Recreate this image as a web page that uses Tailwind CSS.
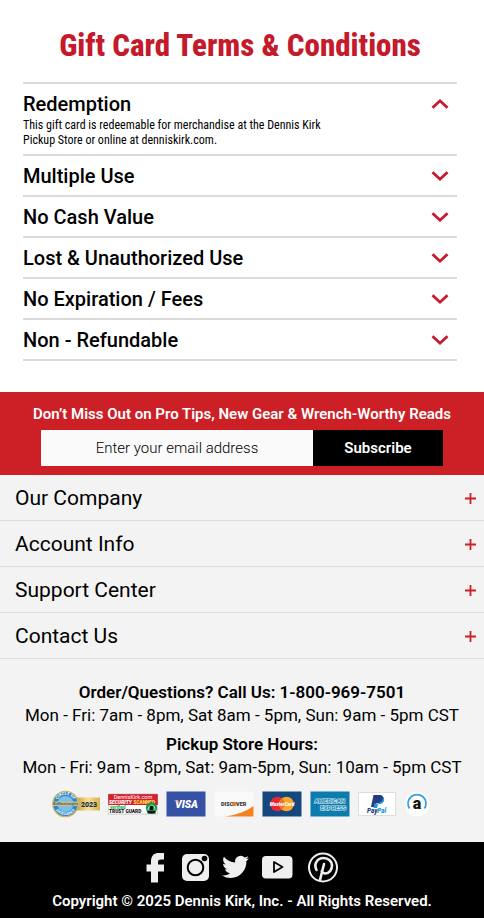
<!DOCTYPE html>
<html lang="en">
<head>
  <meta charset="UTF-8" />
  <meta name="viewport" content="width=device-width, initial-scale=1.0"/>
  <title>Gift Card Terms | Dennis Kirk</title>
  <script src="https://cdn.jsdelivr.net/npm/@tailwindcss/browser@4"></script>
</head>
<body class="bg-white text-black font-['Roboto',sans-serif]">

  <!-- Terms -->
  <main class="pl-[23px] pr-[27px] pt-6 pb-[31px]">
    <h1 class="text-center text-[31px] leading-[44px] mb-[14px] font-extrabold text-[#c41a2b] whitespace-nowrap font-['Roboto_Condensed','Roboto',sans-serif]">Gift Card Terms &amp; Conditions</h1>
    <div class="border-t-2 border-[#dadada]">
      <section class="border-b-2 border-[#dadada]">
        <button type="button" aria-expanded="true" aria-controls="redemption" class="flex w-full items-center justify-between pt-2 pb-0.5 pr-2 text-left text-xl leading-6 font-medium">
          Redemption
          <svg class="w-[18px] h-3" viewBox="0 0 18 12" fill="none" stroke="#c41a2b" stroke-width="2.8"><path d="M1.500 9.800 9 2.800l7.500 7"/></svg>
        </button>
        <p id="redemption" class="pb-1.5 text-xs leading-[15px] font-['Roboto_Condensed','Roboto',sans-serif]">This gift card is redeemable for merchandise at the Dennis Kirk<br>Pickup Store or online at denniskirk.com.</p>
      </section>
      <section class="border-b-2 border-[#dadada]">
        <button type="button" aria-expanded="false" class="flex w-full items-center justify-between pt-2 pb-[7px] pr-2 text-left text-xl leading-6 font-medium">
          Multiple Use
          <svg class="w-[18px] h-3" viewBox="0 0 18 12" fill="none" stroke="#c41a2b" stroke-width="2.8"><path d="m1.500 2.200 7.500 7 7.500-7"/></svg>
        </button>
      </section>
      <section class="border-b-2 border-[#dadada]">
        <button type="button" aria-expanded="false" class="flex w-full items-center justify-between pt-2 pb-[7px] pr-2 text-left text-xl leading-6 font-medium">
          No Cash Value
          <svg class="w-[18px] h-3" viewBox="0 0 18 12" fill="none" stroke="#c41a2b" stroke-width="2.8"><path d="m1.500 2.200 7.500 7 7.500-7"/></svg>
        </button>
      </section>
      <section class="border-b-2 border-[#dadada]">
        <button type="button" aria-expanded="false" class="flex w-full items-center justify-between pt-2 pb-[7px] pr-2 text-left text-xl leading-6 font-medium">
          Lost &amp; Unauthorized Use
          <svg class="w-[18px] h-3" viewBox="0 0 18 12" fill="none" stroke="#c41a2b" stroke-width="2.8"><path d="m1.500 2.200 7.500 7 7.500-7"/></svg>
        </button>
      </section>
      <section class="border-b-2 border-[#dadada]">
        <button type="button" aria-expanded="false" class="flex w-full items-center justify-between pt-2 pb-[7px] pr-2 text-left text-xl leading-6 font-medium">
          No Expiration / Fees
          <svg class="w-[18px] h-3" viewBox="0 0 18 12" fill="none" stroke="#c41a2b" stroke-width="2.8"><path d="m1.500 2.200 7.500 7 7.500-7"/></svg>
        </button>
      </section>
      <section class="border-b-2 border-[#dadada]">
        <button type="button" aria-expanded="false" class="flex w-full items-center justify-between pt-2 pb-[7px] pr-2 text-left text-xl leading-6 font-medium">
          Non - Refundable
          <svg class="w-[18px] h-3" viewBox="0 0 18 12" fill="none" stroke="#c41a2b" stroke-width="2.8"><path d="m1.500 2.200 7.500 7 7.500-7"/></svg>
        </button>
      </section>
    </div>
  </main>

  <footer class="bg-[#f3f3f3]">
    <!-- Newsletter -->
    <form class="bg-[#cc1f26] pt-3 pb-[9px] px-[41px]">
      <label for="email" class="flex justify-center whitespace-nowrap text-[15px] leading-5 font-semibold text-white">Don’t Miss Out on Pro Tips, New Gear &amp; Wrench-Worthy Reads</label>
      <div class="mt-1.5 flex h-9">
        <input id="email" type="email" placeholder="Enter your email address" class="min-w-0 flex-1 bg-[#fafafa] text-center text-[15px] font-light placeholder:text-black">
        <button type="button" class="w-[130px] bg-black text-[15px] font-semibold text-white">Subscribe</button>
      </div>
    </form>

    <!-- Link groups -->
    <nav>
      <button type="button" class="flex h-[46px] w-full items-center justify-between border-b border-[#dcdcdc] pt-0.5 pl-[15px] pr-2 text-left text-[21px]">
        Our Company
        <svg class="size-[11px]" viewBox="0 0 11 11" stroke="#cc1f26" stroke-width="1.8"><path d="M5.500 0v11M0 5.500h11"/></svg>
      </button>
      <button type="button" class="flex h-[46px] w-full items-center justify-between border-b border-[#dcdcdc] pt-0.5 pl-[15px] pr-2 text-left text-[21px]">
        Account Info
        <svg class="size-[11px]" viewBox="0 0 11 11" stroke="#cc1f26" stroke-width="1.8"><path d="M5.500 0v11M0 5.500h11"/></svg>
      </button>
      <button type="button" class="flex h-[46px] w-full items-center justify-between border-b border-[#dcdcdc] pt-0.5 pl-[15px] pr-2 text-left text-[21px]">
        Support Center
        <svg class="size-[11px]" viewBox="0 0 11 11" stroke="#cc1f26" stroke-width="1.8"><path d="M5.500 0v11M0 5.500h11"/></svg>
      </button>
      <button type="button" class="flex h-[46px] w-full items-center justify-between border-b border-[#dcdcdc] pt-0.5 pl-[15px] pr-2 text-left text-[21px]">
        Contact Us
        <svg class="size-[11px]" viewBox="0 0 11 11" stroke="#cc1f26" stroke-width="1.8"><path d="M5.500 0v11M0 5.500h11"/></svg>
      </button>
    </nav>

    <!-- Hours -->
    <div class="flex flex-col items-center pt-[22px] text-[17px] leading-[23px] whitespace-nowrap">
      <a href="tel:18009697501" class="font-semibold">Order/Questions? Call Us: 1-800-969-7501</a>
      <p>Mon - Fri: 7am - 8pm, Sat 8am - 5pm, Sun: 9am - 5pm CST</p>
      <p class="mt-1.5 font-semibold">Pickup Store Hours:</p>
      <p>Mon - Fri: 9am - 8pm, Sat: 9am-5pm, Sun: 10am - 5pm CST</p>
    </div>

    <!-- Badges -->
    <div class="flex items-center justify-center gap-2 pt-[11px] pb-6">
      <svg class="h-7 w-12" viewBox="0 0 48 28" role="img" aria-label="Circle of Excellence 2023">
        <defs>
          <linearGradient id="gold"><stop stop-color="#c99d35"/><stop offset=".5" stop-color="#f6e09a"/><stop offset="1" stop-color="#d9b34e"/></linearGradient>
          <path id="arcTop" d="M4.300 14a9.200 9.200 0 0 1 18.400 0"/>
          <path id="arcBottom" d="M1.500 13a12 12 0 0 0 24 0"/>
        </defs>
        <path fill="url(#gold)" d="M24 7.500h24v13H24z"/>
        <circle cx="13.500" cy="14" r="12.700" fill="#2f88c6" stroke="#d2b565" stroke-width="1.200"/>
        <circle cx="13.500" cy="14" r="8" fill="#7cc0e8"/>
        <path fill="#cbbf94" d="M.5 11.500h26.500v4.500H.5z"/>
        <text font-size="4" font-weight="700" fill="#fff"><textPath href="#arcTop" startOffset="50%" text-anchor="middle">CIRCLE OF</textPath></text>
        <text font-size="3.700" font-weight="700" fill="#fff"><textPath href="#arcBottom" startOffset="50%" text-anchor="middle">EXCELLENCE</textPath></text>
        <text x="13.700" y="15" font-size="3.600" font-weight="700" fill="#4c6068" text-anchor="middle">BizRateInsights</text>
        <text x="37" y="16.500" font-size="7" font-weight="900" fill="#14334f" text-anchor="middle">2023</text>
      </svg>
      <svg class="h-[22px] w-[50px]" viewBox="0 0 50 22" role="img" aria-label="Denniskirk.com Security Scanned Trust Guard">
        <path fill="#fff" d="M0 1h50v20H0z"/>
        <path fill="#d91f2b" d="M0 1h50v11H0z"/>
        <path fill="none" stroke="#999" stroke-width=".5" d="M.2 1h49.600v20H.2z"/>
        <text x="25" y="5.700" font-size="5.500" fill="#fff" text-anchor="middle">DennisKirk.com</text>
        <text x="1" y="11" font-size="5" font-weight="900" font-style="italic" fill="#fff">SECURITY</text>
        <text x="25.500" y="11" font-size="4.700" font-weight="900" fill="#ffe24a">SCANNED</text>
        <text x="2" y="16" font-size="4.500" font-weight="900" fill="#27b35d">verified</text>
        <text x="1" y="20" font-size="4.800" font-weight="900" fill="#111">TRUST GUARD</text>
        <circle cx="43.500" cy="15" r="5.700" fill="#15934d"/>
        <path fill="#111" d="M39.500 18h8v2.500h-8zM42 12h3v5h-3z"/>
        <path fill="none" stroke="#b8f0c9" d="M40 17c0-3 2-5 4-5s3 3 3 5"/>
      </svg>
      <svg class="h-[26px] w-10" viewBox="0 0 40 26" role="img" aria-label="Visa">
        <path fill="#3552a5" d="M.5.500H39.500v25H.5z"/>
        <text x="20.500" y="16.800" font-size="10.500" font-weight="900" font-style="italic" fill="#fff" text-anchor="middle">VISA</text>
        <path fill="#f7a33b" d="M8.500 9.200H12l1.500 3.500C12.500 11.200 10.500 10 8.500 9.700z"/>
      </svg>
      <svg class="h-[26px] w-10" viewBox="0 0 40 26" role="img" aria-label="Discover">
        <path fill="#f9f9f9" d="M.5.500H39.500v25H.5z"/>
        <path fill="#f58220" d="M39.500 15v10.500H11C23 24 33 20 39.500 15z"/>
        <circle cx="20.500" cy="13" r="2.200" fill="#f58220"/>
        <text x="7" y="15" font-size="5.500" font-weight="900" fill="#30343b">DISC</text>
        <text x="22" y="15" font-size="5.500" font-weight="900" fill="#30343b">VER</text>
      </svg>
      <svg class="h-[26px] w-10" viewBox="0 0 40 26" role="img" aria-label="MasterCard">
        <path fill="#15477f" d="M.5.500H39.500v25H.5z"/>
        <circle cx="15.500" cy="13" r="7.300" fill="#e82735"/>
        <circle cx="24.500" cy="13" r="7.300" fill="#f9a72b"/>
        <path fill="#ef7230" d="M20 7.300a7.300 7.300 0 0 1 0 11.400 7.300 7.300 0 0 1 0-11.400z"/>
        <text x="20" y="14.800" font-size="4.800" font-weight="900" font-style="italic" fill="#fff" text-anchor="middle">MasterCard</text>
      </svg>
      <svg class="h-[26px] w-10" viewBox="0 0 40 26" role="img" aria-label="American Express">
        <path fill="#0d7cad" d="M.5.500H39.500v25H.5z"/>
        <g font-size="6" font-weight="700" fill="#1b83b2" stroke="#d8edf6" stroke-width="1.200" paint-order="stroke">
          <text x="4.500" y="12">AMERICAN</text>
          <text x="36" y="18.500" text-anchor="end">EXPRESS</text>
        </g>
      </svg>
      <svg class="h-[26px] w-10" viewBox="0 0 40 26" role="img" aria-label="PayPal">
        <path fill="#fff" stroke="#ddd" d="M.5 1.500H37.500v23H.5z"/>
        <path fill="#263b80" d="M15.500 4h6c3.500 0 4.500 2.500 3.500 5-1 2.500-3 3-6 3h-1l-1 4h-4z"/>
        <path fill="#159bd7" d="M25 6c1.500 1 1.500 3 .5 5-1 1.800-3 2.200-5.500 2.200L19 17h-3.500l1-4.500h2.200C22 12.500 24.500 11 25 6z"/>
        <text x="9" y="21.800" font-size="6.300" font-weight="900" font-style="italic" fill="#263b80">Pay<tspan fill="#159bd7">Pal</tspan></text>
      </svg>
      <svg class="size-[26px]" viewBox="0 0 26 26" role="img" aria-label="Affirm">
        <circle cx="11" cy="13" r="12.500" fill="#fff"/>
        <path fill="none" stroke="#35a0e2" stroke-width="1.700" d="M3.500 17.500A9 9 0 1 1 18.500 17.500"/>
        <text x="11" y="18" font-size="16" font-weight="900" fill="#111" text-anchor="middle">a</text>
      </svg>
    </div>

    <!-- Social -->
    <div class="bg-black pt-[9px] pb-1.5 text-white">
      <div class="flex items-center justify-center gap-3">
        <a href="#" aria-label="Facebook"><svg class="h-8 w-6" viewBox="8 0 24 32" fill="#efefef"><path d="M13 31.500V20.500H8.500v-7H13V10.500C13 4.500 16 2 21 2h5v6.500h-3c-2 0-3 .7-3 2.500v2.500h6v7h-6v11z"/></svg></a>
        <a href="#" aria-label="Instagram"><svg class="h-8 w-7" viewBox="0 0 28 32"><rect x="0" y="3" width="27" height="27" rx="5" fill="#efefef"/><circle cx="13.500" cy="16.500" r="7.800" fill="none" stroke="#000" stroke-width="2"/><circle cx="22.500" cy="7.500" r="2.800"/></svg></a>
        <a href="#" aria-label="Twitter"><svg class="h-8 w-7" viewBox="2 0 21 24" fill="#efefef"><path d="M22.200 5.500c-.7.300-1.500.6-2.400.7.900-.5 1.500-1.300 1.800-2.300-.8.500-1.700.8-2.600 1a4.200 4.200 0 0 0-7.100 3.800c-3.400-.2-6.500-1.800-8.500-4.300-1.100 1.900-.6 4.300 1.300 5.600-.7 0-1.300-.2-1.900-.5 0 2 1.400 3.700 3.300 4.100-.6.200-1.200.2-1.900.1.600 1.700 2.100 2.900 3.900 2.900A8.500 8.500 0 0 1 2 18.300a12 12 0 0 0 6.400 1.900c7.700 0 12.200-6.600 11.900-12.500.8-.6 1.400-1.300 1.900-2.200z"/></svg></a>
        <a href="#" aria-label="YouTube"><svg class="size-8" viewBox="0 0 32 32"><rect x="0" y="5" width="30.500" height="22.500" rx="4" fill="#efefef"/><path fill="none" stroke="#000" stroke-width="1.800" stroke-linejoin="round" d="M12 11v10l8.500-5z"/></svg></a>
        <a href="#" aria-label="Pinterest"><svg class="size-8" viewBox="0 0 32 32" fill="none" stroke="#efefef"><circle cx="17" cy="16.500" r="14" stroke-width="2"/><path stroke-width="2.600" stroke-linecap="round" d="M10.500 19c-3-5.500.5-12 7-12 5 0 8.500 3.500 8.500 7.500 0 4.500-3 8-6.500 8-2 0-3.300-.9-3.800-2.200M18 13l-4 16"/></svg></a>
      </div>
      <p class="mt-2 text-center text-[15px] leading-[21px] font-semibold whitespace-nowrap">Copyright © 2025 Dennis Kirk, Inc. - All Rights Reserved.</p>
    </div>
  </footer>

</body>
</html>
